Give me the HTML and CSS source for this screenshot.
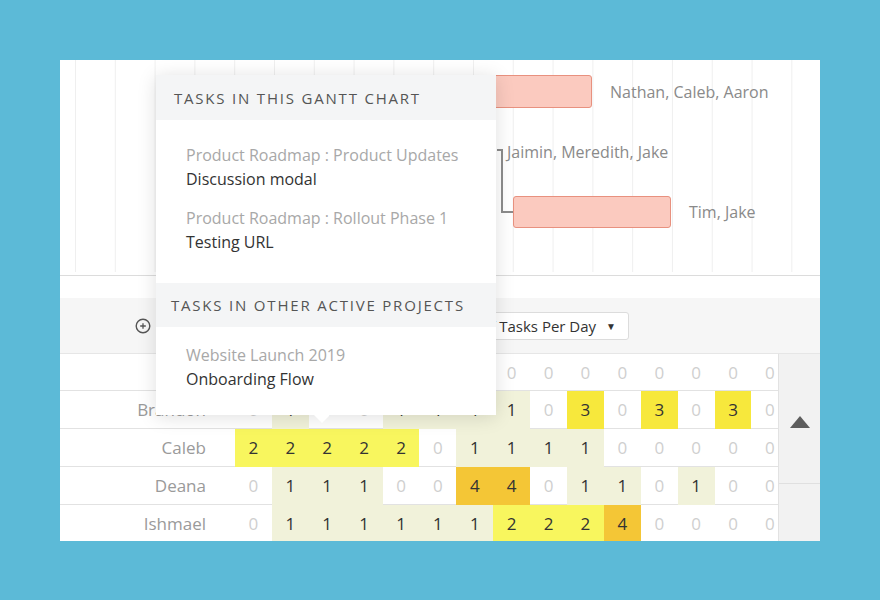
FILE: index.html
```html
<!DOCTYPE html>
<html lang="en">
<head>
    <meta charset="UTF-8">
    <meta name="viewport" content="width=device-width, initial-scale=1.0">
    <title>Workload</title>

    <link rel="stylesheet" href="styles.css">
</head>
<body>

    <div class="card">

        <!-- Gantt chart area -->
        <div class="gantt">
            <div class="bar bar-one"></div>
            <span class="bar-label label-one">Nathan, Caleb, Aaron</span>

            <svg class="connector" width="30" height="70" viewBox="0 0 30 70">
                <path d="M0 2 H5 V64 H18" fill="none" stroke="#8c8c8c" stroke-width="2"/>
            </svg>
            <span class="bar-label label-two">Jaimin, Meredith, Jake</span>

            <div class="bar bar-two"></div>
            <span class="bar-label label-three">Tim, Jake</span>
        </div>

        <div class="gap"></div>

        <!-- Toolbar -->
        <div class="toolbar">
            <svg class="addIcon" width="16" height="16" viewBox="0 0 16 16">
                <circle cx="8" cy="8" r="6.8" fill="none" stroke="#555" stroke-width="1.4"/>
                <path d="M8 5.2 V10.8 M5.2 8 H10.8" stroke="#555" stroke-width="1.3"/>
            </svg>
            <div class="dropdown">
                <span>Number of Tasks Per Day</span>
                <span class="caret">&#9660;</span>
            </div>
        </div>

        <!-- Workload grid -->
        <div class="workload">
            <div class="grid" id="grid"></div>
            <div class="scroller">
                <div class="scroller-top">
                    <span class="arrowUp"></span>
                </div>
            </div>
        </div>

        <!-- Popover -->
        <div class="popover">
            <div class="popover-head">Tasks in this Gantt Chart</div>
            <div class="popover-body first">
                <div class="task">
                    <div class="task-project">Product Roadmap : Product Updates</div>
                    <div class="task-name">Discussion modal</div>
                </div>
                <div class="task">
                    <div class="task-project">Product Roadmap : Rollout Phase 1</div>
                    <div class="task-name">Testing URL</div>
                </div>
            </div>
            <div class="popover-head second">Tasks in other active projects</div>
            <div class="popover-body last">
                <div class="task">
                    <div class="task-project">Website Launch 2019</div>
                    <div class="task-name">Onboarding Flow</div>
                </div>
            </div>
        </div>

    </div>

    <script>
        // Tasks per day for each person (null = hidden under the popover)
        const people = [
            { name: '',        days: [null, null, null, null, null, null, null, 0, 0, 0, 0, 0, 0, 0, 0] },
            { name: 'Brandon', days: [0, 1, 0, 0, 1, 1, 1, 1, 0, 3, 0, 3, 0, 3, 0] },
            { name: 'Caleb',   days: [2, 2, 2, 2, 2, 0, 1, 1, 1, 1, 0, 0, 0, 0, 0] },
            { name: 'Deana',   days: [0, 1, 1, 1, 0, 0, 4, 4, 0, 1, 1, 0, 1, 0, 0] },
            { name: 'Ishmael', days: [0, 1, 1, 1, 1, 1, 1, 2, 2, 2, 4, 0, 0, 0, 0] }
        ];

        const grid = document.getElementById('grid');

        people.forEach(person => {
            const row = document.createElement('div');
            row.classList.add('row');

            const label = document.createElement('div');
            label.classList.add('name');
            label.textContent = person.name;
            row.appendChild(label);

            person.days.forEach(count => {
                const cell = document.createElement('div');
                cell.classList.add('cell');
                if (count !== null) {
                    cell.classList.add('load' + count);
                    cell.textContent = count;
                }
                row.appendChild(cell);
            });

            grid.appendChild(row);
        });
    </script>

</body>
</html>
```

FILE: styles.css
```css
body {
    margin: 0;
    padding: 60px 0 0 60px;
    height: 600px;
    box-sizing: border-box;
    overflow: hidden;
    background-color: #5cbad7;
    font-family: "Open Sans", Lato, sans-serif;
}

.card {
    position: relative;
    width: 760px;
    height: 481px;
    overflow: hidden;
    background-color: #ffffff;
}

/* Gantt area with day lines */
.gantt {
    position: relative;
    height: 215px;
    border-bottom: 1px solid #dcdcdc;
    background-image: linear-gradient(to right, #efefef 1px, transparent 1px);
    background-size: 39.8px 212px;
    background-repeat: repeat-x;
    background-position: 15px 0;
}

.bar {
    position: absolute;
    background-color: #fbcabf;
    border: 1px solid #e8917f;
    border-radius: 3px;
    box-sizing: border-box;
}

.bar-one {
    left: 330px;
    top: 15px;
    width: 202px;
    height: 33px;
}

.bar-two {
    left: 453px;
    top: 136px;
    width: 158px;
    height: 32px;
}

.bar-label {
    position: absolute;
    font-size: 16px;
    line-height: 20px;
    color: #8a8a8a;
    white-space: nowrap;
}

.label-one {
    left: 550px;
    top: 22px;
}

.label-two {
    left: 447px;
    top: 82px;
}

.label-three {
    left: 629px;
    top: 142px;
}

.connector {
    position: absolute;
    left: 437px;
    top: 88px;
}

.gap {
    height: 22px;
}

/* Toolbar */
.toolbar {
    display: flex;
    align-items: center;
    height: 55px;
    padding-right: 191px;
    background-color: #f6f6f6;
}

.addIcon {
    margin-left: 75px;
}

.dropdown {
    display: flex;
    align-items: center;
    margin-left: auto;
    height: 26px;
    padding: 0 12px 0 10px;
    background-color: #ffffff;
    border: 1px solid #dcdcdc;
    border-radius: 3px;
    font-size: 15px;
    color: #333333;
}

.caret {
    margin-left: 10px;
    font-size: 10px;
}

/* Workload grid */
.workload {
    display: flex;
    height: 188px;
    border-top: 1px solid #e6e6e6;
}

.grid {
    width: 718px;
    overflow: hidden;
    flex-shrink: 0;
}

.row {
    display: grid;
    grid-template-columns: 175px repeat(15, 36.9px);
    height: 38px;
    border-bottom: 1px solid #e2e2e2;
    box-sizing: border-box;
}

.row:first-child {
    height: 37px;
}

.name {
    padding-right: 29px;
    text-align: right;
    font-size: 17px;
    line-height: 38px;
    color: #9a9a9a;
}

.cell {
    text-align: center;
    font-size: 17px;
    line-height: 37px;
    color: #333333;
}

.load0 {
    color: #cfcfcf;
}

.load1 {
    background-color: #f1f2da;
}

.load2 {
    background-color: #f8f65e;
}

.load3 {
    background-color: #f7e83c;
}

.load4 {
    background-color: #f4c636;
}

.scroller {
    flex: 1;
    background-color: #f2f2f2;
    border-left: 1px solid #e2e2e2;
}

.scroller-top {
    display: flex;
    justify-content: center;
    height: 129px;
    border-bottom: 1px solid #e0e0e0;
}

.arrowUp {
    margin-top: 62px;
    width: 0;
    height: 0;
    border-left: 10px solid transparent;
    border-right: 10px solid transparent;
    border-bottom: 12px solid #5e5e5e;
}

/* Popover over the chart */
.popover {
    position: absolute;
    left: 96px;
    top: 15px;
    width: 340px;
    background-color: #ffffff;
    box-shadow: 0 2px 18px rgba(0, 0, 0, 0.13);
}

.popover::after {
    content: "";
    position: absolute;
    left: 158px;
    bottom: -8px;
    border-left: 8px solid transparent;
    border-right: 8px solid transparent;
    border-top: 8px solid #ffffff;
}

.popover-head {
    height: 45px;
    padding-left: 18px;
    background-color: #f4f5f6;
    font-size: 15px;
    line-height: 46px;
    letter-spacing: 1.8px;
    text-transform: uppercase;
    color: #555555;
}

.popover-head.second {
    height: 44px;
    padding-left: 15px;
    line-height: 44px;
}

.popover-body {
    padding-left: 30px;
}

.popover-body.first {
    padding-top: 23px;
    padding-bottom: 29px;
}

.popover-body.last {
    padding-top: 16px;
    padding-bottom: 24px;
}

.task + .task {
    margin-top: 15px;
}

.task-project {
    font-size: 16px;
    line-height: 24px;
    color: #a8a8a8;
}

.task-name {
    font-size: 16px;
    line-height: 24px;
    color: #333333;
}
```
